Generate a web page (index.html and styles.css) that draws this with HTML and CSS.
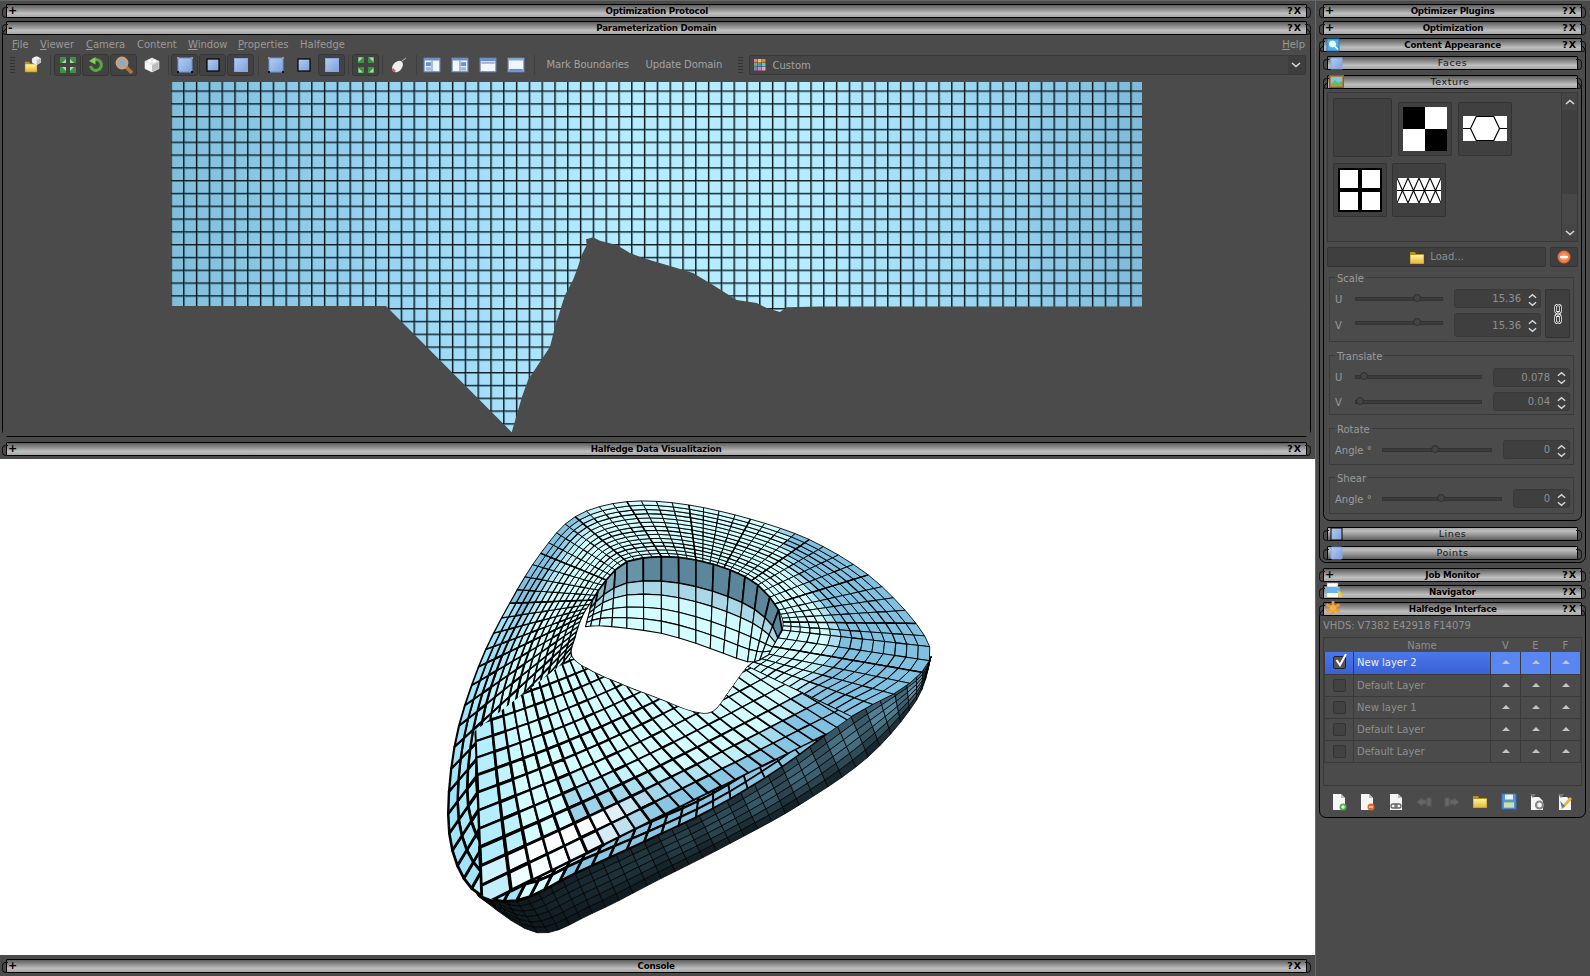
FILE: index.html
```html
<!DOCTYPE html>
<html>
<head>
<meta charset="utf-8">
<title>Parameterization Domain</title>
<link rel="stylesheet" href="styles.css">
<script src="mesh.js"></script>
</head>
<body>
<svg class="defs" width="0" height="0">
	<defs>
		<linearGradient id="gFolder" x1="0" y1="0" x2="0" y2="1"><stop offset="0" stop-color="#fff3a0"/><stop offset="1" stop-color="#e8b830"/></linearGradient>
		<linearGradient id="gBlue" x1="0" y1="0" x2="1" y2="1"><stop offset="0" stop-color="#b4cdf2"/><stop offset="1" stop-color="#7da0dc"/></linearGradient>
		<radialGradient id="gOrange"><stop offset="0" stop-color="#ffc090"/><stop offset="1" stop-color="#e8642a"/></radialGradient>
		<symbol id="folder" viewBox="0 0 16 16"><path d="M1 3h5l1 2h8v10H1z" fill="#b89020"/><path d="M1.5 6h13v8.500h-13z" fill="url(#gFolder)"/></symbol>
		<symbol id="cube" viewBox="0 0 16 16"><path d="M8 2l6 3v6l-6 3-6-3V5z" fill="#e4e4e4" stroke="#e4e4e4" stroke-linejoin="round"/><path d="M8 8l6-3v6l-6 3z" fill="#bdbdbd"/><path d="M8 8L2 5v6l6 3z" fill="#f4f4f4"/><circle cx="6" cy="4.500" r="1.500" fill="#fff"/><circle cx="10" cy="4.500" r="1.500" fill="#fff"/></symbol>
		<symbol id="arrows-in" viewBox="0 0 18 18"><g fill="#3f8f45"><rect x="1" y="1" width="6" height="6"/><rect x="11" y="1" width="6" height="6"/><rect x="1" y="11" width="6" height="6"/><rect x="11" y="11" width="6" height="6"/></g><g fill="#a8dca4"><path d="M7 7V3L3 7z"/><path d="M11 7V3l4 4z"/><path d="M7 11v4l-4-4z"/><path d="M11 11v4l4-4z"/></g></symbol>
		<symbol id="arrows-out" viewBox="0 0 18 18"><g fill="#3f8f45"><rect x="1" y="1" width="6" height="6"/><rect x="11" y="1" width="6" height="6"/><rect x="1" y="11" width="6" height="6"/><rect x="11" y="11" width="6" height="6"/></g><g fill="#a8dca4"><path d="M1.500 1.500h4.500l-4.500 4.500z"/><path d="M16.500 1.500H12l4.500 4.500z"/><path d="M1.500 16.500H6L1.500 12z"/><path d="M16.500 16.500H12l4.500-4.500z"/></g></symbol>
		<symbol id="undo" viewBox="0 0 18 18"><path d="M5 5a5.500 5.500 0 1 1-1.500 5" fill="none" stroke="#57a83f" stroke-width="3"/><path d="M8.500 1L2 5l6.500 3.500z" fill="#7ed05c"/></symbol>
		<symbol id="zoom" viewBox="0 0 18 18"><path d="M11 11l6 6" stroke="#b8762f" stroke-width="3.500"/><circle cx="7" cy="7" r="5.500" fill="#92a9c4" stroke="#d9a162" stroke-width="1.800"/></symbol>
		<symbol id="face-pts" viewBox="0 0 18 18"><rect x="2" y="2" width="14" height="14" rx="1" fill="url(#gBlue)" stroke="#6f93d2"/><g fill="#111"><rect x="1" y="1" width="2" height="2" fill="#999"/><rect x="15" y="1" width="2" height="2" fill="#999"/><rect x="1" y="15" width="2" height="2"/><rect x="15" y="15" width="2" height="2"/></g></symbol>
		<symbol id="face-line" viewBox="0 0 18 18"><rect x="3" y="3" width="12" height="12" fill="url(#gBlue)" stroke="#000" stroke-width="1.200"/></symbol>
		<symbol id="face-fill" viewBox="0 0 18 18"><rect x="2.500" y="2.500" width="13" height="13" fill="url(#gBlue)" stroke="#8aa8e0"/></symbol>
		<symbol id="win-a" viewBox="0 0 16 16"><rect x="1" y="2" width="14" height="12" fill="#f2f6fc" stroke="#6d8fc8"/><rect x="1" y="2" width="14" height="2" fill="#6d8fc8"/><rect x="2.500" y="5.500" width="4.500" height="3.500" fill="#6d8fc8"/><path d="M8 4v10" stroke="#6d8fc8"/><rect x="2.500" y="10" width="4.500" height="3" fill="#9db6de"/></symbol>
		<symbol id="win-b" viewBox="0 0 16 16"><rect x="1" y="2" width="14" height="12" fill="#f2f6fc" stroke="#6d8fc8"/><rect x="1" y="2" width="14" height="2" fill="#6d8fc8"/><rect x="9" y="5.500" width="4.500" height="3.500" fill="#6d8fc8"/><path d="M8 4v10" stroke="#6d8fc8"/><rect x="9" y="10" width="4.500" height="3" fill="#9db6de"/></symbol>
		<symbol id="win-c" viewBox="0 0 16 16"><rect x="1" y="2" width="14" height="12" fill="#f2f6fc" stroke="#6d8fc8"/><rect x="1" y="2" width="14" height="2.500" fill="#6d8fc8"/><rect x="2" y="5" width="12" height="2" fill="#9db6de"/></symbol>
		<symbol id="win-d" viewBox="0 0 16 16"><rect x="1" y="2" width="14" height="12" fill="#f2f6fc" stroke="#6d8fc8"/><rect x="1" y="2" width="14" height="2" fill="#8aa6d4"/><rect x="2" y="11.500" width="12" height="2" fill="#6d8fc8"/></symbol>
		<symbol id="mouse" viewBox="0 0 18 18"><ellipse cx="7.500" cy="10.500" rx="4.500" ry="6.500" transform="rotate(40 7.500 10.500)" fill="#eee"/><path d="M3 12l3 3-2 1-2-2z" fill="#b55"/><path d="M12 5l4-3" stroke="#bbb"/></symbol>
		<symbol id="chain" viewBox="0 0 8 20"><g fill="none" stroke="#fff" stroke-width="2.400"><rect x="1.500" y="1" width="5" height="8" rx="2"/><rect x="1.500" y="11" width="5" height="8" rx="2"/><path d="M4 7v6"/></g><g fill="none" stroke="#000" stroke-width=".8"><rect x="1.500" y="1" width="5" height="8" rx="2"/><rect x="1.500" y="11" width="5" height="8" rx="2"/></g></symbol>
		<symbol id="up" viewBox="0 0 10 6"><path d="M1 5l4-3.500L9 5" fill="none" stroke="#d8d8d8" stroke-width="1.600"/></symbol>
		<symbol id="down" viewBox="0 0 10 6"><path d="M1 1l4 3.500L9 1" fill="none" stroke="#d8d8d8" stroke-width="1.600"/></symbol>
		<symbol id="doc" viewBox="0 0 16 18"><path d="M2 1h8l4 4v12H2z" fill="#f6f6f6"/><path d="M10 1l4 4h-4z" fill="#bbb"/></symbol>
	</defs>
</svg>

<div class="main">
	<div class="dock">
		<div class="bar"><span class="plus">+</span><b>Optimization Protocol</b><span class="qx">?X</span></div>
	</div>
	<div class="dock">
		<div class="bar"><span class="plus">-</span><b>Parameterization Domain</b><span class="qx">?X</span></div>
		<div class="body">
			<div class="menu">
				<span class="m1"><u>F</u>ile</span>
				<span class="m2"><u>V</u>iewer</span>
				<span class="m3"><u>C</u>amera</span>
				<span class="m4">Content</span>
				<span class="m5"><u>W</u>indow</span>
				<span class="m6"><u>P</u>roperties</span>
				<span class="m7">Halfedge</span>
				<span class="help"><u>H</u>elp</span>
			</div>
			<div class="tools">
				<i class="grip"></i>
				<span class="tb plain"><svg class="ic20"><use href="#folder" x="1" y="4" width="14" height="14"/><use href="#cube" x="8" y="0" width="11" height="11"/></svg></span>
				<i class="sep s1"></i>
				<span class="tb"><svg class="ic18"><use href="#arrows-in"/></svg></span>
				<span class="tb"><svg class="ic18"><use href="#undo"/></svg></span>
				<span class="tb"><svg class="ic18"><use href="#zoom"/></svg></span>
				<span class="tb plain"><svg class="ic18"><use href="#cube"/></svg></span>
				<i class="sep s2"></i>
				<span class="tb"><svg class="ic18"><use href="#face-pts"/></svg></span>
				<span class="tb"><svg class="ic18"><use href="#face-line"/></svg></span>
				<span class="tb"><svg class="ic18"><use href="#face-fill"/></svg></span>
				<i class="sep s1"></i>
				<span class="tb plain"><svg class="ic18"><use href="#face-pts"/></svg></span>
				<span class="tb plain"><svg class="ic18"><use href="#face-line"/></svg></span>
				<span class="tb"><svg class="ic18"><use href="#face-fill"/></svg></span>
				<i class="sep s3"></i>
				<span class="tb"><svg class="ic18"><use href="#arrows-out"/></svg></span>
				<i class="sep s4"></i>
				<span class="tb plain"><svg class="ic18"><use href="#mouse"/></svg></span>
				<i class="sep s5"></i>
				<span class="tb plain"><svg class="ic18"><use href="#win-a"/></svg></span>
				<span class="tb plain"><svg class="ic18"><use href="#win-b"/></svg></span>
				<span class="tb plain"><svg class="ic18"><use href="#win-c"/></svg></span>
				<span class="tb plain"><svg class="ic18"><use href="#win-d"/></svg></span>
				<i class="sep s6"></i>
				<span class="txt t1">Mark Boundaries</span>
				<span class="txt t2">Update Domain</span>
				<i class="grip g2"></i>
				<div class="combo">
					<svg class="pal" viewBox="0 0 12 12"><rect width="3.500" height="3.500" fill="#e8807a"/><rect x="4" width="3.500" height="3.500" fill="#e8c84c"/><rect x="8" width="3.500" height="3.500" fill="#e88040"/><rect y="4" width="3.500" height="3.500" fill="#5cb860"/><rect x="4" y="4" width="3.500" height="3.500" fill="#4c90d8"/><rect x="8" y="4" width="3.500" height="3.500" fill="#58c8c8"/><rect y="8" width="3.500" height="3.500" fill="#8878d0"/><rect x="4" y="8" width="3.500" height="3.500" fill="#e878b0"/><rect x="8" y="8" width="3.500" height="3.500" fill="#f0a0c0"/></svg>
					<span class="ctext">Custom</span>
					<span class="carrow"><svg class="chev"><use href="#down"/></svg></span>
				</div>
			</div>
			<svg class="domain" viewBox="3 76 1307 360">
				<defs>
					<linearGradient id="gDomain" gradientUnits="userSpaceOnUse" x1="171" y1="0" x2="1142" y2="0">
						<stop offset="0" stop-color="#80bedb"/><stop offset=".24" stop-color="#9ad6f3"/><stop offset=".46" stop-color="#b5ecff"/><stop offset=".65" stop-color="#b5ecff"/><stop offset=".85" stop-color="#97d3ef"/><stop offset="1" stop-color="#7fbad8"/>
					</linearGradient>
					<pattern id="pCell" patternUnits="userSpaceOnUse" x="170.300" y="77.600" width="12.800" height="12.800">
						<path d="M0 0H12.800M0 0V12.800" fill="none" stroke="#1b3a4a" stroke-opacity=".55" stroke-width="4"/>
						<path d="M0 0H12.800M0 0V12.800" fill="none" stroke="#000" stroke-width="1.700"/>
					</pattern>
					<clipPath id="cDomain"><rect x="171" y="82" width="971" height="356"/></clipPath>
				</defs>
				<g clip-path="url(#cDomain)">
					<rect x="171" y="82" width="971" height="356" fill="url(#gDomain)"/>
					<rect x="171" y="82" width="971" height="356" fill="url(#pCell)"/>
				</g>
				<path class="mask" d="M0 306H386L511.700 432.300L522 396.700L528 380L550 346.700L555 326.700L565 295L573 280L578 266.700L581.700 255L586.700 245L586 239.300L593 237.300L600 240.700L616.700 245L630 253L643 258L676.700 268L693 273L713 285L736.700 300L756.700 303L766.700 308L780 312L786.700 307.300L820 306.500H1142H1320V440H0Z"/>
			</svg>
		</div>
	</div>
	<div class="dock d3">
		<div class="bar"><span class="plus">+</span><b>Halfedge Data Visualitazion</b><span class="qx">?X</span></div>
	</div>
	<div class="view"><svg id="model" viewBox="0 459 1315 496"></svg></div>
	<div class="dock d4">
		<div class="bar"><span class="plus">+</span><b>Console</b><span class="qx">?X</span></div>
	</div>
</div>

<div class="side">
	<div class="dock">
		<div class="bar"><span class="plus">+</span><b>Optimizer Plugins</b><span class="qx">?X</span></div>
	</div>
	<div class="dock">
		<div class="bar"><span class="plus">+</span><b>Optimization</b><span class="qx">?X</span></div>
	</div>
	<div class="dock">
		<div class="bar">
			<svg class="baric"><rect x="1" y="1" width="12" height="12" fill="#4db0e8" stroke="#2a80c0"/><circle cx="6.500" cy="6" r="3" fill="#dff" stroke="#fff"/><path d="M9 8.500l3 3" stroke="#fff" stroke-width="1.500"/></svg>
			<b>Content Appearance</b><span class="qx">?X</span>
		</div>
		<div class="body b-app">
			<div class="dock inner d-faces">
				<div class="bar sub"><svg class="baric"><rect x="1" y="2" width="11" height="11" fill="url(#gBlue)" stroke="#8aa8e0"/></svg><em>Faces</em></div>
			</div>
			<div class="dock inner d-tex">
				<div class="bar sub"><svg class="baric wide"><rect x="0.500" y="0.500" width="14" height="12" fill="#b0803c" stroke="#8a6028"/><rect x="2" y="2" width="11" height="9" fill="#7cc4e8"/><path d="M2 9l4-4 3 3 4-2v5H2z" fill="#6cb85c"/></svg><em class="em-tex">Texture</em></div>
				<div class="body b-tex">
					<div class="list">
						<div class="thumbs">
							<div class="trow">
								<span class="thumb blank"></span>
								<span class="thumb first"><svg width="44" height="44"><rect width="44" height="44" fill="#fff"/><rect width="22" height="22" fill="#000"/><rect x="22" y="22" width="22" height="22" fill="#000"/></svg></span>
								<span class="thumb first"><svg class="top11" width="44" height="25"><rect width="44" height="25" fill="#fff"/><path d="M0 12.500h7.500l6-12.500M7.500 12.500l6 12.500M44 12.500h-7.500l-6-12.500M36.500 12.500l-6 12.500M13.500 .5h17M13.500 24.500h17" fill="none" stroke="#000" stroke-width="1.200"/></svg></span>
							</div>
							<div class="trow">
								<span class="thumb"><svg width="44" height="44"><rect width="44" height="44" fill="#000"/><rect x="2" y="2" width="18" height="18" fill="#fff"/><rect x="24" y="2" width="18" height="18" fill="#fff"/><rect x="2" y="24" width="18" height="18" fill="#fff"/><rect x="24" y="24" width="18" height="18" fill="#fff"/></svg></span>
								<span class="thumb"><svg class="top14" width="44" height="25"><rect width="44" height="25" fill="#fff"/><path d="M0 12.500H44M0 0l11 25L22 0l11 25L44 0M0 25L11 0l11 25L33 0l11 25" fill="none" stroke="#000" stroke-width="1.100"/></svg></span>
							</div>
						</div>
						<div class="vscroll">
							<span class="sbtn"><svg class="chev"><use href="#up"/></svg></span>
							<span class="shandle"></span>
							<span class="strough"></span>
							<span class="sbtn"><svg class="chev"><use href="#down"/></svg></span>
						</div>
					</div>
					<div class="loadrow">
						<span class="btn load"><svg class="ic16"><use href="#folder"/></svg><span>Load...</span></span>
						<span class="btn rem"><svg class="ic14" viewBox="0 0 14 14"><circle cx="7" cy="7" r="6.500" fill="url(#gOrange)"/><rect x="3" y="6" width="8" height="2.200" fill="#fff"/></svg></span>
					</div>

					<div class="group g-scale">
						<span class="gt">Scale</span>
						<div class="gwrap">
							<div class="gcol">
								<div class="row h19"><label>U</label><div class="slider s-scale"><i style="left:57px"></i></div><div class="spin w87"><span>15.36</span><svg class="ud"><use href="#up" y="1" width="9" height="6"/><use href="#down" y="9" width="9" height="6"/></svg></div></div>
								<div class="row h24"><label>V</label><div class="slider s-scale lift"><i style="left:57px"></i></div><div class="spin w87 full"><span>15.36</span><svg class="ud"><use href="#up" y="1" width="9" height="6"/><use href="#down" y="9" width="9" height="6"/></svg></div></div>
							</div>
							<span class="btn link"><svg width="8" height="20"><use href="#chain"/></svg></span>
						</div>
					</div>

					<div class="group g-trans">
						<span class="gt">Translate</span>
						<div class="row h20"><label>U</label><div class="slider s-trans"><i style="left:4px"></i></div><div class="spin w77"><span>0.078</span><svg class="ud"><use href="#up" y="1" width="9" height="6"/><use href="#down" y="9" width="9" height="6"/></svg></div></div>
						<div class="row h19 r2"><label>V</label><div class="slider s-trans"><i style="left:0"></i></div><div class="spin w77"><span>0.04</span><svg class="ud"><use href="#up" y="1" width="9" height="6"/><use href="#down" y="9" width="9" height="6"/></svg></div></div>
					</div>

					<div class="group g-rot">
						<span class="gt">Rotate</span>
						<div class="row h19"><label class="lang">Angle °</label><div class="slider s-rot"><i style="left:48px"></i></div><div class="spin w67"><span>0</span><svg class="ud"><use href="#up" y="1" width="9" height="6"/><use href="#down" y="9" width="9" height="6"/></svg></div></div>
					</div>

					<div class="group g-shear">
						<span class="gt">Shear</span>
						<div class="row h19"><label class="lang">Angle °</label><div class="slider s-shear"><i style="left:54px"></i></div><div class="spin w57"><span>0</span><svg class="ud"><use href="#up" y="1" width="9" height="6"/><use href="#down" y="9" width="9" height="6"/></svg></div></div>
					</div>
				</div>
			</div>
			<div class="dock inner d-lines">
				<div class="bar sub low"><svg class="baric"><rect x="1" y="1" width="11" height="12" fill="url(#gBlue)" stroke="#000"/></svg><em>Lines</em></div>
			</div>
			<div class="dock inner d-points">
				<div class="bar sub low"><svg class="baric"><rect x="1" y="1" width="11" height="12" rx="1" fill="url(#gBlue)" stroke="#8aa8e0"/></svg><em>Points</em></div>
			</div>
		</div>
	</div>
	<div class="dock d-job">
		<div class="bar"><span class="plus">+</span><b>Job Monitor</b><span class="qx">?X</span></div>
	</div>
	<div class="dock">
		<div class="bar">
			<svg class="baric wide2"><rect x="2" y="0" width="11" height="4" fill="#fff" stroke="#888" stroke-width=".5"/><rect x="0" y="4" width="15" height="6" fill="#6ab4e8"/><rect x="2" y="10" width="11" height="4" fill="#fff"/><path d="M12 7l4 2 1 5h-3z" fill="#ecd040"/></svg>
			<b>Navigator</b><span class="qx">?X</span>
		</div>
	</div>
	<div class="dock">
		<div class="bar">
			<svg class="baric wide2" viewBox="0 0 16 16"><path d="M8 1v14M1.500 4.500l13 7M14.500 4.500l-13 7" stroke="#f09a28" stroke-width="2.800"/><circle cx="8" cy="8" r="3" fill="#f4b040"/></svg>
			<b>Halfedge Interface</b><span class="qx">?X</span>
		</div>
		<div class="body b-half">
			<div class="vhds">VHDS: V7382 E42918 F14079</div>
			<div class="tablebox">
				<table class="layers">
					<tr class="head"><th class="c0"></th><th class="c1">Name</th><th>V</th><th>E</th><th>F</th></tr>
					<tr class="sel"><td class="c0"><span class="check on"><svg width="14" height="14" viewBox="0 0 14 14"><path d="M2.500 6l3.500 5 6-11" fill="none" stroke="#fff" stroke-width="2"/></svg></span></td><td class="c1">New layer 2</td><td><i class="tri"></i></td><td><i class="tri"></i></td><td><i class="tri"></i></td></tr>
					<tr><td class="c0"><span class="check"></span></td><td class="c1">Default Layer</td><td><i class="tri"></i></td><td><i class="tri"></i></td><td><i class="tri"></i></td></tr>
					<tr><td class="c0"><span class="check"></span></td><td class="c1">New layer 1</td><td><i class="tri"></i></td><td><i class="tri"></i></td><td><i class="tri"></i></td></tr>
					<tr><td class="c0"><span class="check"></span></td><td class="c1">Default Layer</td><td><i class="tri"></i></td><td><i class="tri"></i></td><td><i class="tri"></i></td></tr>
					<tr><td class="c0"><span class="check"></span></td><td class="c1">Default Layer</td><td><i class="tri"></i></td><td><i class="tri"></i></td><td><i class="tri"></i></td></tr>
				</table>
			</div>
			<div class="layerbtns">
				<svg class="lb" viewBox="0 0 16 18"><use href="#doc" width="16" height="18"/><circle cx="12" cy="14" r="3.500" fill="#56b050"/><path d="M10 14h4M12 12v4" stroke="#fff"/></svg>
				<svg class="lb" viewBox="0 0 16 18"><use href="#doc" width="16" height="18"/><circle cx="12" cy="14" r="3.500" fill="#e8642a"/><path d="M10 14h4" stroke="#fff"/></svg>
				<svg class="lb" viewBox="0 0 16 18"><use href="#doc" width="16" height="18"/><g fill="none" stroke="#666" stroke-width="1.300"><rect x="3" y="11" width="6" height="4" rx="2"/><rect x="7" y="11" width="6" height="4" rx="2"/></g></svg>
				<svg class="lb" viewBox="0 0 16 18"><path d="M1 9l5-4v2h4v4H6v2zM11 5h4v8h-4z" fill="#666" stroke="#5a5a5a"/></svg>
				<svg class="lb" viewBox="0 0 16 18"><path d="M15 9l-5-4v2H6v4h4v2zM1 5h4v8H1z" fill="#666" stroke="#5a5a5a"/></svg>
				<svg class="lb" viewBox="0 0 16 18"><use href="#folder" width="16" height="16"/></svg>
				<svg class="lb" viewBox="0 0 16 18"><rect x="1" y="1" width="14" height="15" fill="#5a94dc" stroke="#3c70c0"/><rect x="4" y="1.500" width="8" height="5" fill="#e8f0fa"/><rect x="3" y="9" width="10" height="6" fill="#9ed07c"/><path d="M3 11h10M3 13h10" stroke="#eef"/></svg>
				<svg class="lb" viewBox="0 0 16 18"><path d="M2 1l3 3h5l4 4v9H2z" fill="#f6f6f6"/><path d="M1 1h6L4 5z" fill="#777"/><circle cx="10.500" cy="12" r="3.500" fill="none" stroke="#888" stroke-width="2.200"/></svg>
				<svg class="lb" viewBox="0 0 16 18"><path d="M2 1l3 3h5l4 4v9H2z" fill="#f6f6f6"/><path d="M1 1h6L4 5z" fill="#777"/><path d="M5 13l8-9 2 2-8 9-3 1z" fill="#e8b830"/><path d="M3 8l5 5-3 2z" fill="#4c7cc0"/></svg>
			</div>
		</div>
	</div>
</div>
</body>
</html>
```

FILE: styles.css
```css
*{ margin:0; padding:0; box-sizing:border-box;}
html,body{ width:1590px; height:976px; overflow:hidden;}
body{ background:#4b4b4b; color:#a2a2a2; font:10px "DejaVu Sans",sans-serif; display:flex;}
i,em{ font-style:normal;}
svg{ display:block;}
.defs{ position:absolute;}

/* columns */
.main{ width:1315px; flex:none; display:flex; flex-direction:column; padding-top:3px; border-top:1px solid #666;}
.side{ width:275px; flex:none; padding:3px 0 0 1px; border-top:1px solid #666; border-left:1px solid #6a6a6a;}

/* dock widgets */
.dock{ margin:0 2px 3px;}
.main .dock{ width:1309px;}
.side .dock{ width:267px;}
.side .dock.inner{ width:259px; margin:0 0 0 3px;}
.bar{ height:14px; margin:0 4px; border:1px solid #000; border-radius:1px; position:relative; z-index:1; display:flex; align-items:center; justify-content:center; color:#000; line-height:12px;
	background:linear-gradient(#5d5d5d,#9a9a9a 45%,#bebebe 70%,#a6a6a6);}
.bar.low{ background:linear-gradient(#a6a6a6,#bebebe 25%,#8c8c8c 65%,#5d5d5d);}
.bar::before,.bar::after{ content:""; position:absolute; top:2px; width:5px; height:9px; border:1px solid #141414;}
.bar::before{ left:-5px; border-right:0; border-radius:4px 0 0 4px;}
.bar::after{ right:-5px; border-left:0; border-radius:0 4px 4px 0;}
.bar b{ font-size:9.500px; letter-spacing:-.25px; transform:scaleX(.92);}
.plus{ position:absolute; left:1px; top:-1px; font-size:11px; line-height:13px; font-weight:bold;}
.qx{ position:absolute; right:4px; top:0; font-weight:bold; font-size:9.500px; letter-spacing:1px;}
.bar.sub em{ font-size:9.500px; letter-spacing:.6px; color:#141414;}
.em-tex{ margin-right:5px;}
.baric{ position:absolute; left:2px; top:-1px; width:13px; height:14px; overflow:visible;}
.baric.wide{ left:1px; width:15px; top:-1px;}
.baric.wide2{ left:1px; width:16px; height:16px; top:-3px;}
.body{ border:1px solid #000; border-radius:7px; margin-top:-7px; padding-top:7px;}

/* parameterization panel */
.menu{ height:18px; position:relative; color:#9a9a9a;}
.menu span{ position:absolute; top:3px;}
.m1{ left:9px;}
.m2{ left:37px;}
.m3{ left:83px;}
.m4{ left:134px;}
.m5{ left:185px;}
.m6{ left:235px;}
.m7{ left:297px;}
.help{ right:5px;}
.tools{ height:22px; display:flex; align-items:center; padding-left:7px;}
.grip{ width:5px; height:16px; flex:none; margin-right:4px; background:repeating-linear-gradient(#333 0 1px,transparent 1px 3px);}
.grip.g2{ margin:0 6px 0 0;}
.sep{ width:1px; height:20px; background:#3d3d3d; flex:none;}
.s1{ margin:0 3px;}
.s2{ margin:0 2px;}
.s3{ margin:0 3px 0 2px;}
.s4{ margin:0 2.500px 0 2px;}
.s5{ margin:0 1.500px 0 2.500px;}
.s6{ margin:0 0 0 3.500px;}
.tb{ width:27px; height:22px; flex:none; margin-right:1px; display:flex; align-items:center; justify-content:center; background:#424242; border:1px solid #363636; border-radius:3px;}
.tb.plain{ background:none; border-color:transparent;}
.ic18{ width:18px; height:18px;}
.ic20{ width:20px; height:20px;}
.ic14{ width:14px; height:14px;}
.ic16{ width:16px; height:16px;}
.txt{ flex:none; letter-spacing:-.12px; margin-top:-1px;}
.t1{ margin-left:11.500px; width:99px;}
.t2{ width:92px;}
.combo{ width:557px; height:20px; flex:none; background:#454545; border:1px solid #393939; border-radius:2px; display:flex; align-items:center; padding-left:4px;}
.pal{ width:12px; height:12px;}
.ctext{ margin-left:7px; flex:1;}
.carrow{ width:17px; height:18px; background:#3d3d3d; display:flex; align-items:center; justify-content:center;}
.chev{ width:10px; height:6px;}
.domain{ width:1307px; height:360px;}
.mask{ fill:#4b4b4b;}
.d3{ margin-top:2px;}
.view{ height:496px; background:#fff;}
.view svg{ width:1315px; height:496px;}
.d4{ margin-top:4px;}

/* appearance panel */
.b-app{ height:518px;}
.d-faces{ padding-top:3px;}
.d-tex{ padding-top:5px;}
.b-tex{ height:439px; padding:9px 3px 0;}
.d-lines{ padding-top:6px;}
.d-points{ padding-top:5px;}
.d-job{ margin-top:5px;}
.list{ height:150px; border:1px solid #383838; display:flex; background:#484848;}
.thumbs{ flex:1; padding:5px 0 0 5px;}
.trow{ display:flex; gap:5px; margin-bottom:5px;}
.trow:first-child{ height:60px; gap:6px;}
.thumb{ width:54px; height:54px; background:#404040; border:1px solid #333; border-radius:2px; padding:4px; flex:none;}
.thumb.blank{ width:59px; height:59px;}
.thumb.first{ margin-top:4px;}
.top11{ margin-top:9px;}
.top14{ margin-top:10px;}
.vscroll{ width:16px; flex:none; display:flex; flex-direction:column; border-left:1px solid #383838;}
.sbtn{ height:17px; background:#454545; display:flex; align-items:center; justify-content:center;}
.shandle{ height:84px; background:#3f3f3f;}
.strough{ flex:1; background:#484848;}
.loadrow{ display:flex; gap:4px; margin-top:5px;}
.btn{ background:#3f3f3f; border:1px solid #343434; border-radius:2px; display:flex; align-items:center; justify-content:center;}
.load{ width:219px; height:20px; gap:5px; color:#8e8e8e;}
.load span{ margin-top:-1px;}
.rem{ width:28px; height:20px;}

.group{ border:1px solid #3a3a3a; width:245px; margin-left:2px; position:relative; padding:0 0 0 5px;}
.gt{ position:absolute; left:5px; top:-5px; padding:0 2px; background:#4b4b4b; line-height:12px; color:#9a9a9a;}
.g-scale{ height:65px; margin-top:10px; padding-top:11px;}
.g-trans{ height:60px; margin-top:13px; padding-top:11px;}
.g-rot{ height:37px; margin-top:13px; padding-top:11px;}
.g-shear{ height:37px; margin-top:12px; padding-top:11px;}
.gwrap{ display:flex; gap:4px;}
.row{ display:flex; align-items:center;}
.row.r2{ margin-top:5px;}
.h19{ height:19px;}
.h20{ height:20px;}
.h24{ height:24px; margin-top:5px;}
.row label{ width:20px; flex:none; margin-top:1px; color:#9a9a9a;}
.row label.lang{ width:47px;}
.slider{ height:4px; background:#3c3c3c; border:1px solid #333; position:relative; flex:none;}
.slider.lift{ margin-bottom:4px;}
.slider i{ position:absolute; top:-4px; width:8px; height:8px; border-radius:50%; background:#444; border:1px solid #2e2e2e;}
.s-scale{ width:88px;}
.s-trans{ width:127px;}
.s-rot{ width:110px;}
.s-shear{ width:120px;}
.spin{ height:19px; flex:none; margin-left:11px; background:#3f3f3f; border:1px solid #393939; border-radius:3px; display:flex; align-items:center; justify-content:flex-end; padding-right:3px; color:#8f8f8f;}
.spin.full{ height:24px;}
.spin span{ margin-right:7px;}
.ud{ width:9px; height:15px; flex:none; margin-top:1px;}
.w87{ width:87px;}
.w77{ width:77px;}
.w67{ width:67px;}
.w57{ width:57px;}
.link{ width:25px; height:49px;}

/* halfedge panel */
.b-half{ height:209px; padding:0 3px;}
.vhds{ padding-top:10px; line-height:12px; color:#929292; letter-spacing:-.06px;}
.tablebox{ height:149px; margin-top:5px; border:1px solid #3a3a3a;}
.layers{ border-collapse:collapse; table-layout:fixed; width:256px;}
.layers th{ height:14px; font-weight:normal; color:#8e8e8e; width:30px; padding:0;}
.layers td{ height:22px; text-align:center; border:1px solid #3a3a3a; padding:0; border-top:0; color:#8e8e8e;}
.layers .c0{ width:29px;}
.layers .c1{ width:137px;}
.layers td.c1{ text-align:left; padding-left:3px;}
.sel td{ background:#5a86f2;}
.sel td.c1,.sel td.c0{ background:linear-gradient(#4a78ea,#3a60d4); color:#eee;}
.tri{ display:block; width:0; height:0; margin:0 auto 1px; border:4px solid transparent; border-top:0; border-bottom:4px solid #c4c4c4;}
.check{ display:block; width:13px; height:13px; margin:0 auto; background:#424242; border:1px solid #333; border-radius:2px; position:relative;}
.check.on{ background:#555; border-color:#222;}
.check svg{ position:absolute; left:0; top:-3px;}
.layerbtns{ display:flex; gap:10.250px; padding:7px 0 0 7px;}
.lb{ width:18px; height:18px; flex:none;}
```

FILE: mesh.js
```js
// draws the 3d model in the lower viewport
function px(p)
{
	return [420+p[0]/2.9,480+p[1]/3];
}
function catmull(p0,p1,p2,p3,t)
{
	var r=[0,0];
	for(var k=0;k<2;k++)
	{
		r[k]=0.5*(2*p1[k]+(p2[k]-p0[k])*t+(2*p0[k]-5*p1[k]+4*p2[k]-p3[k])*t*t+(3*p1[k]-p0[k]-3*p2[k]+p3[k])*t*t*t);
	}
	return r;
}
function sample(pts,steps,closed)
{
	var out=[];
	var n=pts.length;
	var last=closed?n:n-1;
	for(var i=0;i<last;i++)
	{
		var a=closed?pts[(i-1+n)%n]:pts[Math.max(i-1,0)];
		var b=pts[i];
		var c=closed?pts[(i+1)%n]:pts[i+1];
		var d=closed?pts[(i+2)%n]:pts[Math.min(i+2,n-1)];
		var m=steps[i];
		for(var j=0;j<m;j++)
		{
			out.push(catmull(a,b,c,d,j/m));
		}
	}
	if(!closed) out.push(pts[n-1]);
	return out;
}
function mix(a,b,t)
{
	t=Math.max(0,Math.min(1,t));
	return [a[0]+(b[0]-a[0])*t,a[1]+(b[1]-a[1])*t,a[2]+(b[2]-a[2])*t];
}
function rgb(c)
{
	return 'rgb('+Math.round(c[0])+','+Math.round(c[1])+','+Math.round(c[2])+')';
}
function lerp(a,b,s)
{
	return [a[0]+(b[0]-a[0])*s,a[1]+(b[1]-a[1])*s];
}
function pts(q)
{
	return q.map(function(p){return p[0].toFixed(1)+','+p[1].toFixed(1);}).join(' ');
}

var LIGHT=[212,253,255],WHITE=[255,255,255],BLUE=[128,192,224];

var OUTER=[[260,370],[350,220],[450,110],[600,65],[780,75],[1000,130],[1170,200],[1340,320],[1478,500],[1420,610],[1250,710],[1050,860],[850,985],[650,1085],[450,1180],[280,1262],[150,1225],[85,1060],[100,800],[170,560]].map(px);
var RIM=[[500,360],[540,300],[600,245],[700,230],[800,240],[900,270],[980,315],[1040,390],[1050,450],[1000,520],[950,560],[900,630],[850,695],[790,695],[700,660],[600,620],[500,575],[440,530],[450,470],[470,410]].map(px);
var HOLE=[[480,440],[520,437],[600,445],[700,460],[800,490],[880,520],[950,545],[985,540],[1010,525]].map(px);
var STEPS=[4,4,4,4,5,4,4,5,3,3,4,4,4,4,4,4,4,4,4,4];

function topColor(p,s)
{
	var x=(p[0]-420)*2.9,y=(p[1]-480)*3;
	var c=LIGHT;
	// blue shoulders, upper left and right
	var right=Math.max(0,(x-1050)/150)*Math.max(0,(s-0.3)/0.3)*Math.max(0,1-(y-720)/200);
	var left=Math.max(0,(520-x)/200)*Math.max(0,(640-y)/300)*Math.max(0,(s-0.5)/0.3);
	c=mix(c,BLUE,Math.min(1,right+left));
	// band along the near edge
	var d=(x*0.55+y-1130)/220;
	if(d>-0.7&&s>0.5&&x>420)
	{
		c=mix(c,BLUE,Math.min(0.9,(s-0.5)*4));
	}
	if(x<280&&s>0.55) c=mix(c,[160,228,250],(s-0.55)*2.4);
	// highlight on the near corner
	var dx=x-420,dy=y-1090;
	var along=dx*0.88-dy*0.47,across=dx*0.47+dy*0.88;
	var h=Math.sqrt(Math.pow(along/340,2)+Math.pow(across/70,2));
	if(h<1) c=mix(c,WHITE,(1-h)*1.6);
	return c;
}
function lineWidth(p)
{
	var x=(p[0]-420)*2.9,y=(p[1]-480)*3;
	return 0.9+Math.max(0,(y-x*0.4-100)/800)*1.5;
}
function near(p,list)
{
	var best=1e9;
	for(var i=0;i<list.length;i++)
	{
		var dx=list[i][0]-p[0],dy=list[i][1]-p[1];
		var d=dx*dx+dy*dy;
		if(d<best) best=d;
	}
	return Math.sqrt(best);
}
function draw()
{
	var svg=document.getElementById('model');
	var NS='http://www.w3.org/2000/svg';
	var parent=svg;
	function poly(q,fill,w)
	{
		var e=document.createElementNS(NS,'polygon');
		e.setAttribute('points',pts(q));
		e.setAttribute('fill',fill);
		e.setAttribute('stroke',w?'#000':fill);
		e.setAttribute('stroke-width',w||0.5);
		e.setAttribute('stroke-linejoin','round');
		parent.appendChild(e);
	}
	var i,j;

	// side of the model
	var upper=sample([[150,1220],[280,1262],[450,1180],[650,1085],[850,985],[1050,860],[1250,710],[1440,590],[1482,530]].map(px),[5,5,5,5,5,5,5,5],false);
	var lower=sample([[170,1250],[340,1358],[500,1300],[700,1195],[900,1090],[1100,975],[1300,830],[1440,660],[1482,530]].map(px),[5,5,5,5,5,5,5,5],false);
	var rings=6;
	for(i=0;i<upper.length-1;i++)
	{
		var t=i/(upper.length-1);
		for(j=0;j<rings;j++)
		{
			var a=j/rings,b=(j+1)/rings;
			var q=[lerp(upper[i],lower[i],a),lerp(upper[i+1],lower[i+1],a),lerp(upper[i+1],lower[i+1],b),lerp(upper[i],lower[i],b)];
			var bright=Math.pow(t,1.5)*(0.25+0.9*Math.sin(Math.PI*Math.min(1,a+0.2)));
			var c=mix([13,22,27],[104,164,190],bright);
			if(i%3==0&&t>0.3) c=mix(c,[13,22,27],0.3);
			poly(q,rgb(c),0.8);
		}
	}

	// top face, rings from the hole to the outer edge
	var o=sample(OUTER,STEPS,true);
	var r=sample(RIM,STEPS,true);
	var n=o.length;
	var R=14;
	for(j=0;j<R;j++)
	{
		var s0=Math.pow(j/R,1.08),s1=Math.pow((j+1)/R,1.08);
		for(i=0;i<n;i++)
		{
			var k=(i+1)%n;
			var q2=[lerp(r[i],o[i],s0),lerp(r[k],o[k],s0),lerp(r[k],o[k],s1),lerp(r[i],o[i],s1)];
			var mid=lerp(q2[0],q2[2],0.5);
			var w=lineWidth(mid);
			if(j%4==3) w*=1.3;
			poly(q2,rgb(topColor(mid,(s0+s1)/2)),w);
		}
	}
	// heavier mesh lines every fourth column
	var g=document.createElementNS(NS,'path');
	var d='';
	for(i=0;i<n;i+=4)
	{
		for(j=0;j<R;j++)
		{
			var p0=lerp(r[i],o[i],Math.pow(j/R,1.08)),p1=lerp(r[i],o[i],Math.pow((j+1)/R,1.08));
			d+='M'+p0[0].toFixed(1)+' '+p0[1].toFixed(1)+'L'+p1[0].toFixed(1)+' '+p1[1].toFixed(1);
		}
	}
	g.setAttribute('d',d);
	g.setAttribute('stroke','#000');
	g.setAttribute('stroke-width','1.5');
	g.setAttribute('fill','none');
	svg.appendChild(g);

	// near part of the face: the texture grid runs across the hole here
	var mark=[],sum=0;
	for(i=0;i<STEPS.length;i++){ mark.push(sum); sum+=STEPS[i]; }
	var region=[];
	for(i=mark[10];i<=mark[18];i++) region.push(o[i]);
	for(i=mark[17];i>=mark[10];i--) region.push(r[i]);
	var clip=document.createElementNS(NS,'clipPath');
	clip.setAttribute('id','cNear');
	var cp=document.createElementNS(NS,'polygon');
	cp.setAttribute('points',pts(region));
	clip.appendChild(cp);
	svg.appendChild(clip);
	var patch=document.createElementNS(NS,'g');
	patch.setAttribute('clip-path','url(#cNear)');
	svg.appendChild(patch);
	parent=patch;
	var P00=px([150,470]),P10=px([640,290]),P01=px([180,1275]),P11=px([1320,690]);
	var NA=26,NB=17;
	function warp(u,v)
	{
		var uu=Math.pow(u,0.8),vv=Math.pow(v,1.25);
		var top=lerp(P00,P10,uu),bot=lerp(P01,P11,uu);
		var q=lerp(top,bot,vv);
		// bow the lines a little
		q[1]+=Math.sin(Math.PI*uu)*Math.sin(Math.PI*vv)*12;
		q[0]-=Math.sin(Math.PI*vv)*Math.sin(Math.PI*uu)*8;
		return q;
	}
	for(i=0;i<NA;i++)
	{
		for(j=0;j<NB;j++)
		{
			var q4=[warp(i/NA,j/NB),warp((i+1)/NA,j/NB),warp((i+1)/NA,(j+1)/NB),warp(i/NA,(j+1)/NB)];
			var m=lerp(q4[0],q4[2],0.5);
			var dr=near(m,r),dz=near(m,o);
			var w2=lineWidth(m);
			if(i%4==1||j%4==2) w2*=1.35;
			poly(q4,rgb(topColor(m,dr/(dr+dz))),w2);
		}
	}
	parent=svg;

	// far wall of the hole
	var wt=sample(RIM.slice(0,9),[2,2,2,2,2,2,2,1],false);
	var wb=sample(HOLE,[2,2,2,2,2,2,2,1],false);
	var F=[0,0.32,0.5,0.68,0.84,1];
	var WALL=[[92,134,156],[170,215,230],[205,248,252],[212,253,255],[212,253,255]];
	for(i=0;i<wt.length-1;i++)
	{
		for(j=0;j<5;j++)
		{
			var q3=[lerp(wt[i],wb[i],F[j]),lerp(wt[i+1],wb[i+1],F[j]),lerp(wt[i+1],wb[i+1],F[j+1]),lerp(wt[i],wb[i],F[j+1])];
			var cw=WALL[j];
			if(j==0) cw=mix([150,195,210],WALL[0],i/5);
			poly(q3,rgb(cw),j==0?1.7:1.1);
		}
	}
}
window.onload=draw;
```
